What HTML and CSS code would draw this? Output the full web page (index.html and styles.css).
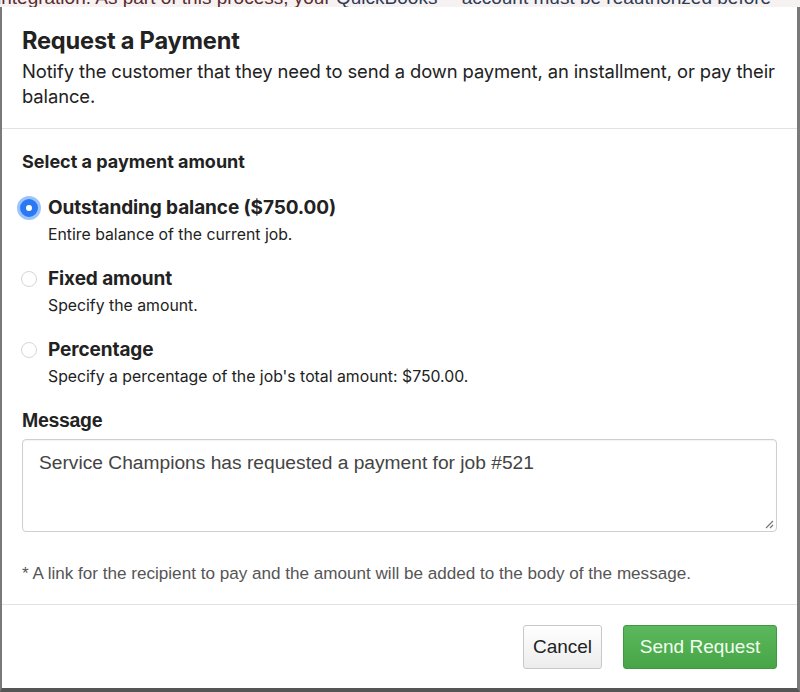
FILE: index.html
```html
<!DOCTYPE html>
<html>
<head>
<meta charset="utf-8">
<link rel="stylesheet" href="styles.css">
</head>
<body>
<div class="backdrop-strip"><div class="backdrop-text">integration. As part of this process, your <span class="blue">QuickBooks™ account must be reauthorized before</span></div></div>
<div class="modal">
  <div class="modal-header">
    <h1 class="title">Request a Payment</h1>
    <p class="subtitle">Notify the customer that they need to send a down payment, an installment, or pay their balance.</p>
  </div>
  <div class="modal-body">
    <div class="section-title">Select a payment amount</div>
    <div class="options">
      <div class="option">
        <span class="radio checked"></span>
        <div class="option-text">
          <div class="option-label">Outstanding balance ($750.00)</div>
          <div class="option-desc">Entire balance of the current job.</div>
        </div>
      </div>
      <div class="option">
        <span class="radio"></span>
        <div class="option-text">
          <div class="option-label">Fixed amount</div>
          <div class="option-desc">Specify the amount.</div>
        </div>
      </div>
      <div class="option">
        <span class="radio"></span>
        <div class="option-text">
          <div class="option-label">Percentage</div>
          <div class="option-desc">Specify a percentage of the job's total amount: $750.00.</div>
        </div>
      </div>
    </div>
    <div class="message-label">Message</div>
    <div class="textarea">
      Service Champions has requested a payment for job #521
      <svg class="grip" width="10" height="10" viewBox="0 0 10 10"><path d="M9 2 L2 9 M9 6 L6 9" stroke="#777" stroke-width="1.2" fill="none"/></svg>
    </div>
    <div class="footnote">* A link for the recipient to pay and the amount will be added to the body of the message.</div>
  </div>
  <div class="modal-footer">
    <button class="btn btn-default">Cancel</button>
    <button class="btn btn-success">Send Request</button>
  </div>
</div>
</body>
</html>
```

FILE: styles.css
```css
html, body {
  margin: 0;
  padding: 0;
  background: #5f5f5f;
}
body {
  width: 800px;
  height: 692px;
  overflow: hidden;
  font-family: "Inter", "Liberation Sans", sans-serif;
  color: #222;
}
.backdrop-strip {
  height: 7px;
  overflow: hidden;
  background: #f6f2f2;
}
.backdrop-text {
  margin-top: -12px;
  margin-left: -3px;
  font-family: "Liberation Sans", sans-serif;
  font-size: 19px;
  line-height: 20px;
  color: #5a2b2f;
  white-space: nowrap;
}
.backdrop-text .blue { color: #2f3a55; }
.modal {
  background: #fff;
  border-left: 2px solid #7a7a7a;
  border-right: 3px solid #7a7a7a;
  border-bottom: 4px solid #555;
  height: 685px;
  box-sizing: border-box;
  display: flex;
  flex-direction: column;
}
.modal-header {
  padding: 20px 20px 19px;
  border-bottom: 1px solid #e2e2e2;
}
.title {
  margin: 0;
  font-size: 23.6px;
  line-height: 28px;
  font-weight: 700;
  color: #222;
  letter-spacing: -0.2px;
}
.subtitle {
  margin: 4px 0 0;
  font-size: 18.4px;
  line-height: 25px;
  color: #222;
  letter-spacing: -0.1px;
}
.modal-body {
  padding: 21px 20px 20px;
  border-bottom: 1px solid #e2e2e2;
}
.section-title {
  font-size: 18px;
  line-height: 24px;
  font-weight: 700;
  color: #222;
}
.options {
  margin-top: 22px;
  display: flex;
  flex-direction: column;
  gap: 21px;
}
.option {
  display: flex;
  gap: 10px;
}
.radio {
  flex: none;
  width: 16px;
  height: 16px;
  border-radius: 50%;
  border: 1px solid #d6d6d6;
  background: #fff;
  margin-top: 4px;
  margin-left: -1px;
  margin-right: 1px;
  box-sizing: border-box;
}
.radio.checked {
  width: 18px;
  height: 18px;
  margin-top: 3px;
  margin-left: -2px;
  margin-right: 0;
  border: 6px solid #2b78f5;
  background: #fff;
  box-shadow: 0 0 0 3px rgba(90, 155, 250, 0.6);
}
.option-label {
  font-size: 19px;
  line-height: 24px;
  font-weight: 700;
  color: #222;
  letter-spacing: -0.1px;
}
.option-desc {
  margin-top: 4px;
  font-size: 15.8px;
  line-height: 22px;
  color: #222;
}
.message-label {
  margin-top: 20px;
  font-family: "Liberation Sans", sans-serif;
  font-size: 19.5px;
  line-height: 24px;
  font-weight: 700;
  color: #222;
  letter-spacing: -0.3px;
}
.textarea {
  position: relative;
  margin-top: 7px;
  height: 93px;
  box-sizing: border-box;
  border: 1px solid #cfcfcf;
  border-radius: 4px;
  padding: 11px 16px;
  font-family: "Liberation Sans", sans-serif;
  font-size: 19.2px;
  line-height: 24px;
  color: #444;
  box-shadow: inset 0 1px 1px rgba(0,0,0,0.05);
}
.grip {
  position: absolute;
  right: 2px;
  bottom: 2px;
}
.footnote {
  margin-top: 32px;
  font-family: "Liberation Sans", sans-serif;
  font-size: 17.1px;
  line-height: 20px;
  color: #555;
}
.modal-footer {
  padding: 20px 20px 0;
  display: flex;
  justify-content: flex-end;
  gap: 21px;
}
.btn {
  height: 44px;
  box-sizing: border-box;
  border-radius: 3px;
  font-family: "Liberation Sans", sans-serif;
  font-size: 19px;
  padding: 0;
  cursor: pointer;
}
.btn-default {
  width: 79px;
  background: linear-gradient(#fff, #ececec);
  border: 1px solid #c8c8c8;
  color: #222;
}
.btn-success {
  width: 154px;
  background: linear-gradient(#5cb85c, #47a447);
  border: 1px solid #3f993f;
  color: #f0fff0;
}
```
